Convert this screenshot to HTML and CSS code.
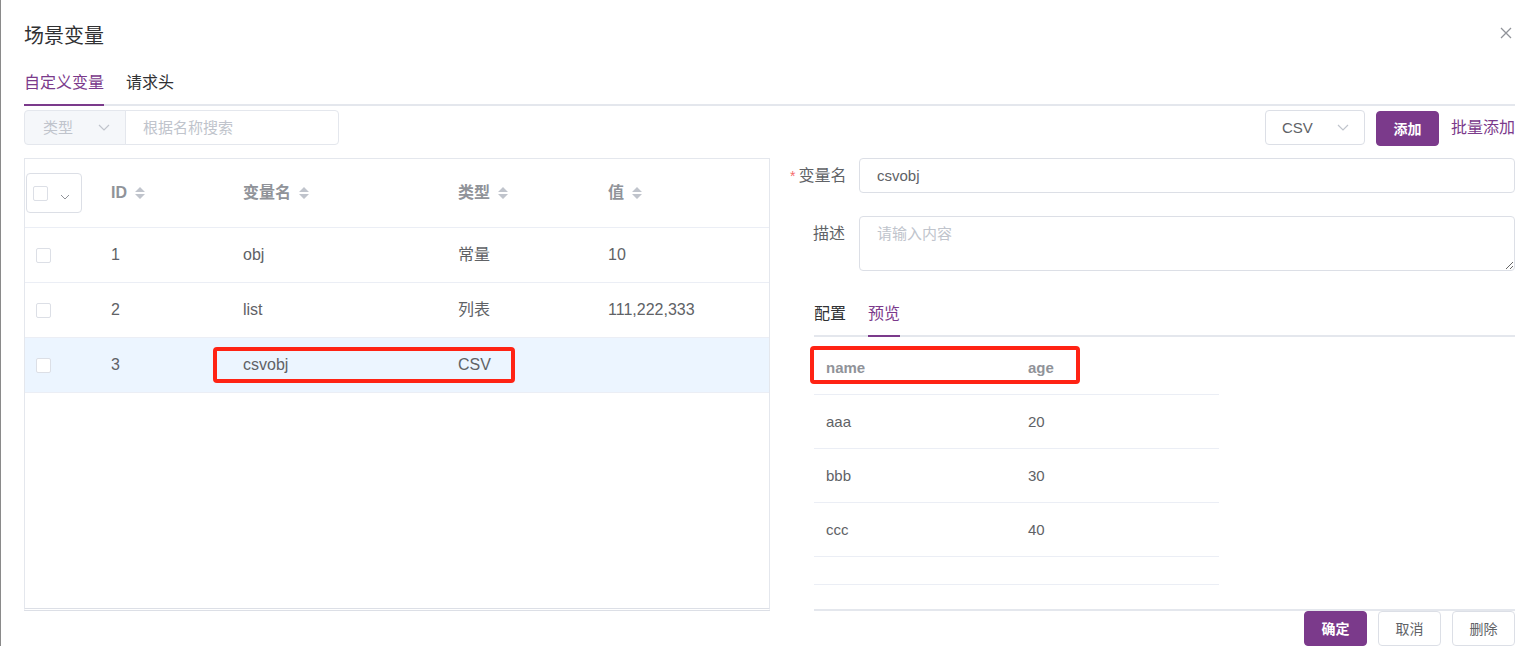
FILE: index.html
```html
<!DOCTYPE html>
<html lang="zh-CN">
<head>
<meta charset="utf-8">
<title>场景变量</title>
<link rel="stylesheet" href="styles.css">
</head>
<body>
<div class="page">
  <header class="dlg-head">
    <h1 class="dlg-title">场景变量</h1>
    <span class="close" aria-label="close">
      <svg width="12" height="12" viewBox="0 0 12 12"><path d="M1 1L11 11M11 1L1 11" stroke="#909399" stroke-width="1.3" fill="none"/></svg>
    </span>
  </header>

  <nav class="tabs">
    <span class="tab active">自定义变量</span>
    <span class="tab">请求头</span>
  </nav>

  <div class="toolbar">
    <div class="search-group">
      <div class="type-select">
        <span>类型</span>
        <svg class="chev" width="12" height="7" viewBox="0 0 12 7"><polyline points="1,1 6,6 11,1" fill="none" stroke="#c0c4cc" stroke-width="1.2"/></svg>
      </div>
      <div class="search-input">根据名称搜索</div>
    </div>
    <div class="toolbar-right">
      <div class="csv-select">
        <span>CSV</span>
        <svg class="chev" width="12" height="7" viewBox="0 0 12 7"><polyline points="1,1 6,6 11,1" fill="none" stroke="#c0c4cc" stroke-width="1.2"/></svg>
      </div>
      <button class="btn btn-primary btn-add">添加</button>
      <a class="link">批量添加</a>
    </div>
  </div>

  <div class="main">
    <section class="var-panel">
      <div class="grid-row head-row">
        <div class="cell sel-cell">
          <div class="sel-drop">
            <span class="checkbox"></span>
            <svg width="10" height="6" viewBox="0 0 10 6"><polyline points="1,1 5,5 9,1" fill="none" stroke="#909399" stroke-width="1"/></svg>
          </div>
        </div>
        <div class="cell th">ID<svg class="caret" width="10" height="12" viewBox="0 0 10 12"><path d="M0 5L5 0L10 5Z M0 7L5 12L10 7Z" fill="#c0c4cc"/></svg></div>
        <div class="cell th">变量名<svg class="caret" width="10" height="12" viewBox="0 0 10 12"><path d="M0 5L5 0L10 5Z M0 7L5 12L10 7Z" fill="#c0c4cc"/></svg></div>
        <div class="cell th">类型<svg class="caret" width="10" height="12" viewBox="0 0 10 12"><path d="M0 5L5 0L10 5Z M0 7L5 12L10 7Z" fill="#c0c4cc"/></svg></div>
        <div class="cell th">值<svg class="caret" width="10" height="12" viewBox="0 0 10 12"><path d="M0 5L5 0L10 5Z M0 7L5 12L10 7Z" fill="#c0c4cc"/></svg></div>
      </div>
      <div class="grid-row body-row">
        <div class="cell chk-cell"><span class="checkbox"></span></div>
        <div class="cell">1</div>
        <div class="cell">obj</div>
        <div class="cell">常量</div>
        <div class="cell">10</div>
      </div>
      <div class="grid-row body-row">
        <div class="cell chk-cell"><span class="checkbox"></span></div>
        <div class="cell">2</div>
        <div class="cell">list</div>
        <div class="cell">列表</div>
        <div class="cell">111,222,333</div>
      </div>
      <div class="grid-row body-row current">
        <div class="cell chk-cell"><span class="checkbox"></span></div>
        <div class="cell">3</div>
        <div class="cell">csvobj</div>
        <div class="cell">CSV</div>
        <div class="cell"></div>
      </div>
    </section>

    <section class="editor">
      <div class="form-row row-name">
        <label class="form-label"><span class="req">*</span>变量名</label>
        <div class="text-input">csvobj</div>
      </div>
      <div class="form-row row-desc">
        <label class="form-label">描述</label>
        <textarea class="text-area" placeholder="请输入内容"></textarea>
      </div>

      <div class="preview">
        <nav class="sub-tabs">
          <span class="sub-tab">配置</span>
          <span class="sub-tab active">预览</span>
        </nav>
        <div class="pv-table">
          <div class="pv-row pv-head"><div class="pv-cell">name</div><div class="pv-cell">age</div></div>
          <div class="pv-row"><div class="pv-cell">aaa</div><div class="pv-cell">20</div></div>
          <div class="pv-row"><div class="pv-cell">bbb</div><div class="pv-cell">30</div></div>
          <div class="pv-row"><div class="pv-cell">ccc</div><div class="pv-cell">40</div></div>
          <div class="pv-row pv-empty"></div>
        </div>
      </div>

      <div class="footer">
        <button class="btn btn-primary">确定</button>
        <button class="btn btn-plain">取消</button>
        <button class="btn btn-plain">删除</button>
      </div>
    </section>
  </div>
</div>

<div class="annot annot-1"></div>
<div class="annot annot-2"></div>
</body>
</html>
```

FILE: styles.css
```css
* { box-sizing: border-box; }

html, body {
  margin: 0;
  height: 646px;
  overflow: hidden;
  background: #fff;
}

body {
  position: relative;
  font-family: "Liberation Sans", "Noto Sans CJK SC", sans-serif;
  color: #606266;
}

.page {
  height: 646px;
  border-left: 1px solid #8a8a8a;
  padding: 24px 21px 0 23px;
}

/* header */
.dlg-head {
  display: flex;
  justify-content: space-between;
  align-items: flex-start;
  height: 24px;
}
.dlg-title {
  margin: 0;
  font-size: 20px;
  line-height: 24px;
  font-weight: normal;
  color: #303133;
}
.close {
  display: block;
  width: 12px;
  height: 12px;
  margin-top: 3px;
  margin-right: 3px;
}
.close svg { display: block; }

/* tabs */
.tabs {
  display: flex;
  gap: 22px;
  margin-top: 16px;
  height: 42px;
  border-bottom: 2px solid #e4e7ed;
}
.tab {
  font-size: 16px;
  line-height: 38px;
  height: 42px;
  color: #303133;
}
.tab.active {
  color: #7b3a8b;
  border-bottom: 2px solid #7b3a8b;
}

/* toolbar */
.toolbar {
  display: flex;
  justify-content: space-between;
  align-items: center;
  margin-top: 4px;
  height: 35px;
}
.search-group { display: flex; }
.type-select {
  width: 102px;
  height: 35px;
  display: flex;
  align-items: center;
  justify-content: space-between;
  padding: 0 15px 0 18px;
  background: #f5f7fa;
  border: 1px solid #e4e7ed;
  border-radius: 4px 0 0 4px;
  color: #c0c4cc;
  font-size: 15px;
  line-height: 20px;
}
.search-input {
  width: 214px;
  height: 35px;
  display: flex;
  align-items: center;
  padding-left: 17px;
  border: 1px solid #e4e7ed;
  border-radius: 0 4px 4px 0;
  margin-left: -1px;
  color: #c0c4cc;
  font-size: 15px;
  line-height: 20px;
}
.chev { display: block; }

.toolbar-right {
  display: flex;
  align-items: center;
}
.csv-select {
  width: 100px;
  height: 35px;
  display: flex;
  align-items: center;
  justify-content: space-between;
  padding: 0 15px 0 16px;
  border: 1px solid #dcdfe6;
  border-radius: 4px;
  color: #606266;
  font-size: 15px;
}
.btn {
  height: 35px;
  width: 63px;
  border-radius: 4px;
  font-family: inherit;
  font-size: 14px;
  line-height: 20px;
  padding: 0;
  cursor: pointer;
}
.btn-primary {
  background: #7b3a8b;
  border: 1px solid #7b3a8b;
  color: #fff;
  font-weight: 600;
}
.btn-plain {
  background: #fff;
  border: 1px solid #dcdfe6;
  color: #606266;
}
.btn-add {
  margin-left: 11px;
  margin-top: 2px;
}
.link {
  margin-left: 12px;
  color: #7b3a8b;
  font-size: 16px;
  line-height: 20px;
}

/* main */
.main {
  display: flex;
  gap: 20px;
  margin-top: 13px;
  height: 488px;
}

.var-panel {
  width: 746px;
  height: 453px;
  flex-shrink: 0;
  border: 1px solid #e4e7ed;
  border-bottom: 3px double #dcdfe6;
}
.grid-row {
  display: grid;
  grid-template-columns: 74px 132px 215px 150px 1fr;
  border-bottom: 1px solid #ebeef5;
}
.head-row { height: 69px; }
.body-row { height: 55px; }
.body-row.current { background: #ecf5ff; }

.cell {
  display: flex;
  align-items: center;
  padding-left: 12px;
  font-size: 16px;
  line-height: 22px;
  color: #606266;
}
.th {
  color: #909399;
  font-weight: bold;
}
.caret {
  margin-left: 8px;
  display: block;
}
.sel-cell { padding-left: 1px; }
.sel-drop {
  width: 56px;
  height: 40px;
  border: 1px solid #dcdfe6;
  border-radius: 4px;
  display: flex;
  align-items: center;
  padding-left: 6px;
  gap: 12px;
}
.sel-drop svg { margin-top: 8px; display: block; }
.chk-cell { padding-left: 11px; }

.checkbox {
  display: inline-block;
  width: 15px;
  height: 15px;
  border: 1px solid #dcdfe6;
  border-radius: 2px;
  background: #fff;
}

/* editor */
.editor {
  flex: 1;
  display: flex;
  flex-direction: column;
}
.form-row {
  display: flex;
  align-items: flex-start;
}
.row-name { margin-bottom: 22px; }
.row-desc { margin-bottom: 24px; }
.form-label {
  width: 69px;
  flex-shrink: 0;
  padding-right: 14px;
  text-align: right;
  line-height: 35px;
  font-size: 16px;
  color: #606266;
  white-space: nowrap;
}
.req {
  color: #f56c6c;
  font-size: 14px;
  margin-right: 3px;
}
.text-input {
  flex: 1;
  height: 35px;
  display: flex;
  align-items: center;
  padding-left: 17px;
  border: 1px solid #dcdfe6;
  border-radius: 4px;
  font-size: 15px;
  color: #606266;
}
.text-area {
  flex: 1;
  height: 55px;
  padding: 6px 17px;
  border: 1px solid #dcdfe6;
  border-radius: 4px;
  font-family: inherit;
  font-size: 15px;
  line-height: 22px;
  color: #606266;
  resize: vertical;
  outline: none;
}
.text-area::placeholder { color: #c0c4cc; }

.preview {
  flex: 1;
  margin-left: 24px;
  border-bottom: 2px solid #e4e7ed;
}
.sub-tabs {
  display: flex;
  gap: 22px;
  height: 42px;
  border-bottom: 2px solid #e4e7ed;
}
.sub-tab {
  font-size: 16px;
  line-height: 38px;
  height: 42px;
  color: #303133;
}
.sub-tab.active {
  color: #7b3a8b;
  border-bottom: 2px solid #7b3a8b;
}

.pv-table {
  width: 405px;
  margin-top: 4px;
}
.pv-row {
  display: grid;
  grid-template-columns: 202px 1fr;
  height: 54px;
  border-bottom: 1px solid #ebeef5;
}
.pv-empty { height: 28px; }
.pv-cell {
  display: flex;
  align-items: center;
  padding-left: 12px;
  font-size: 15px;
  line-height: 22px;
  color: #606266;
}
.pv-head .pv-cell {
  font-weight: bold;
  color: #909399;
}

.footer {
  display: flex;
  justify-content: flex-end;
  gap: 11px;
  height: 35px;
}

/* screenshot annotations */
.annot {
  position: absolute;
  border: 4px solid #ff2314;
  border-radius: 4px;
  pointer-events: none;
}
.annot-1 { left: 213px; top: 347px; width: 302px; height: 36px; }
.annot-2 { left: 810px; top: 346px; width: 270px; height: 38px; }
```
